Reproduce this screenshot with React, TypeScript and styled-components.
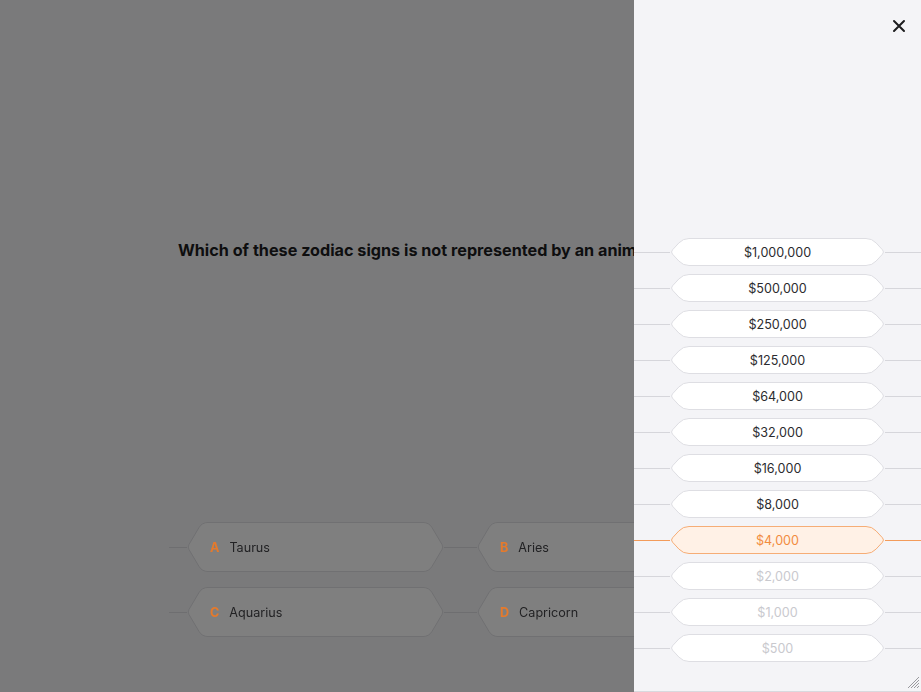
import React from 'react';
import styled, { createGlobalStyle } from 'styled-components';

const GlobalStyle = createGlobalStyle`
  html, body {
    margin: 0;
    padding: 0;
    height: 100%;
    overflow: hidden;
  }
  body {
    background: #f5f5f7;
    font-family: Inter, 'Liberation Sans', sans-serif;
    color: #1c1c1e;
  }
  #root {
    height: 100%;
  }
`;

type Pt = [number, number];

// polygon with softened corners
const roundedPath = (pts: Pt[], radius: number[]) => {
  const n = pts.length;
  let d = '';
  pts.forEach((p, idx) => {
    const prev = pts[(idx - 1 + n) % n];
    const next = pts[(idx + 1) % n];
    const r = radius[idx];
    const toPrev = [prev[0] - p[0], prev[1] - p[1]];
    const toNext = [next[0] - p[0], next[1] - p[1]];
    const lp = Math.hypot(toPrev[0], toPrev[1]);
    const ln = Math.hypot(toNext[0], toNext[1]);
    const a = [p[0] + (toPrev[0] / lp) * r, p[1] + (toPrev[1] / lp) * r];
    const b = [p[0] + (toNext[0] / ln) * r, p[1] + (toNext[1] / ln) * r];
    d += `${idx === 0 ? 'M' : 'L'}${a[0]},${a[1]} Q${p[0]},${p[1]} ${b[0]},${b[1]} `;
  });
  return d + 'Z';
};

const HexShape = ({
  w,
  h,
  inset,
  fill,
  stroke,
}: {
  w: number;
  h: number;
  inset: number;
  fill: string;
  stroke: string;
}) => {
  const o = 0.5;
  const pts: Pt[] = [
    [inset, o],
    [w - inset, o],
    [w - o, h / 2],
    [w - inset, h - o],
    [inset, h - o],
    [o, h / 2],
  ];
  const d = roundedPath(pts, [6, 6, 3, 6, 6, 3]);
  return (
    <ShapeSvg width={w} height={h} viewBox={`0 0 ${w} ${h}`}>
      <path d={d} fill={fill} stroke={stroke} strokeWidth={1} />
    </ShapeSvg>
  );
};

const ShapeSvg = styled.svg`
  position: absolute;
  left: 0;
  top: 0;
  z-index: 0;
`;

const questions = {
  text: 'Which of these zodiac signs is not represented by an animal?',
  answers: [
    { letter: 'A', text: 'Taurus' },
    { letter: 'B', text: 'Aries' },
    { letter: 'C', text: 'Aquarius' },
    { letter: 'D', text: 'Capricorn' },
  ],
};

const prizes = [
  '$1,000,000',
  '$500,000',
  '$250,000',
  '$125,000',
  '$64,000',
  '$32,000',
  '$16,000',
  '$8,000',
  '$4,000',
  '$2,000',
  '$1,000',
  '$500',
];
const currentIndex = 8;

type PrizeState = 'upcoming' | 'current' | 'passed';

const prizeColors: Record<PrizeState, { fill: string; stroke: string; text: string; line: string }> = {
  upcoming: { fill: '#ffffff', stroke: '#dedee3', text: '#2b2b2e', line: '#d6d6db' },
  current: { fill: '#fff1e6', stroke: '#f6ad76', text: '#f28c3f', line: '#f39b5a' },
  passed: { fill: '#ffffff', stroke: '#dedee3', text: '#c9c9ce', line: '#d6d6db' },
};

const App = () => {
  return (
    <>
      <GlobalStyle />
      <Game>
        <QuestionArea>
          <Question>{questions.text}</Question>
        </QuestionArea>
        <Answers>
          {[0, 2].map((start) => (
            <AnswerRow key={start}>
              <Connector $w={18} />
              {questions.answers.slice(start, start + 2).map((a, i) => (
                <React.Fragment key={a.letter}>
                  {i === 1 && <Connector $w={33} />}
                  <AnswerBox>
                    <HexShape w={257} h={50} inset={15} fill="#ffffff" stroke="#e0e0e4" />
                    <Letter>{a.letter}</Letter>
                    <AnswerText>{a.text}</AnswerText>
                  </AnswerBox>
                </React.Fragment>
              ))}
              <Connector $w={18} />
            </AnswerRow>
          ))}
        </Answers>
      </Game>
      <Overlay />
      <Drawer>
        <CloseButton aria-label="close">
          <svg width="14" height="14" viewBox="0 0 14 14">
            <path d="M2 2 L12 12 M12 2 L2 12" stroke="#1c1c1e" strokeWidth="2" strokeLinecap="round" />
          </svg>
        </CloseButton>
        <Ladder>
          {prizes.map((p, i) => {
            const state: PrizeState =
              i === currentIndex ? 'current' : i > currentIndex ? 'passed' : 'upcoming';
            const c = prizeColors[state];
            return (
              <PrizeRow key={p}>
                <Line $color={c.line} />
                <PrizeBox $color={c.text}>
                  <HexShape w={215} h={28} inset={13} fill={c.fill} stroke={c.stroke} />
                  <span>{p}</span>
                </PrizeBox>
                <Line $color={c.line} />
              </PrizeRow>
            );
          })}
        </Ladder>
        <Grip width="14" height="14" viewBox="0 0 14 14">
          <path
            d="M13 2 L2 13 M13 5 L5 13 M13 8 L8 13 M13 11 L11 13"
            stroke="#9a9a9f"
            strokeWidth="1"
          />
        </Grip>
      </Drawer>
    </>
  );
};

export default App;

const Game = styled.div`
  height: 100vh;
  display: flex;
  flex-direction: column;
`;

const QuestionArea = styled.div`
  flex: 1;
  display: flex;
  align-items: center;
  justify-content: center;
  padding-bottom: 22px;
`;

const Question = styled.h2`
  margin: 0;
  width: 583px;
  padding-left: 9px;
  box-sizing: border-box;
  font-size: 16.2px;
  font-weight: 650;
  color: #1c1c1e;
  white-space: nowrap;
`;

const Answers = styled.div`
  display: flex;
  flex-direction: column;
  align-items: center;
  gap: 15px;
  padding-bottom: 55px;
`;

const AnswerRow = styled.div`
  display: flex;
  align-items: center;
`;

const Connector = styled.div<{ $w: number }>`
  width: ${(p) => p.$w}px;
  height: 1px;
  background: #dcdce0;
`;

const AnswerBox = styled.div`
  position: relative;
  width: 257px;
  height: 50px;
  display: flex;
  align-items: center;
  gap: 10px;
  padding-left: 23px;
  box-sizing: border-box;
  font-size: 12.6px;
  & > span {
    position: relative;
    z-index: 1;
  }
`;

const Letter = styled.span`
  font-weight: 700;
  color: #e57a2c;
`;

const AnswerText = styled.span`
  color: #222224;
`;

const Overlay = styled.div`
  position: fixed;
  inset: 0;
  background: rgba(0, 0, 0, 0.5);
`;

const Drawer = styled.aside`
  position: fixed;
  top: 0;
  right: 0;
  width: 287px;
  height: 100%;
  box-sizing: border-box;
  background: #f4f4f7;
  border-bottom: 1px solid #d9d9de;
  display: flex;
  flex-direction: column;
`;

const CloseButton = styled.button`
  position: absolute;
  top: 18px;
  right: 14px;
  width: 16px;
  height: 16px;
  padding: 0;
  border: none;
  background: none;
  display: flex;
  align-items: center;
  justify-content: center;
  cursor: pointer;
`;

const Ladder = styled.div`
  flex: 1;
  display: flex;
  flex-direction: column;
  justify-content: flex-end;
  gap: 8px;
  padding-bottom: 29px;
`;

const PrizeRow = styled.div`
  display: flex;
  align-items: center;
`;

const Line = styled.div<{ $color: string }>`
  flex: 1;
  height: 1px;
  background: ${(p) => p.$color};
`;

const PrizeBox = styled.div<{ $color: string }>`
  position: relative;
  width: 215px;
  height: 28px;
  display: flex;
  align-items: center;
  justify-content: center;
  font-size: 12.6px;
  color: ${(p) => p.$color};
  & > span {
    position: relative;
    z-index: 1;
  }
`;

const Grip = styled.svg`
  position: absolute;
  right: 1px;
  bottom: 2px;
`;
